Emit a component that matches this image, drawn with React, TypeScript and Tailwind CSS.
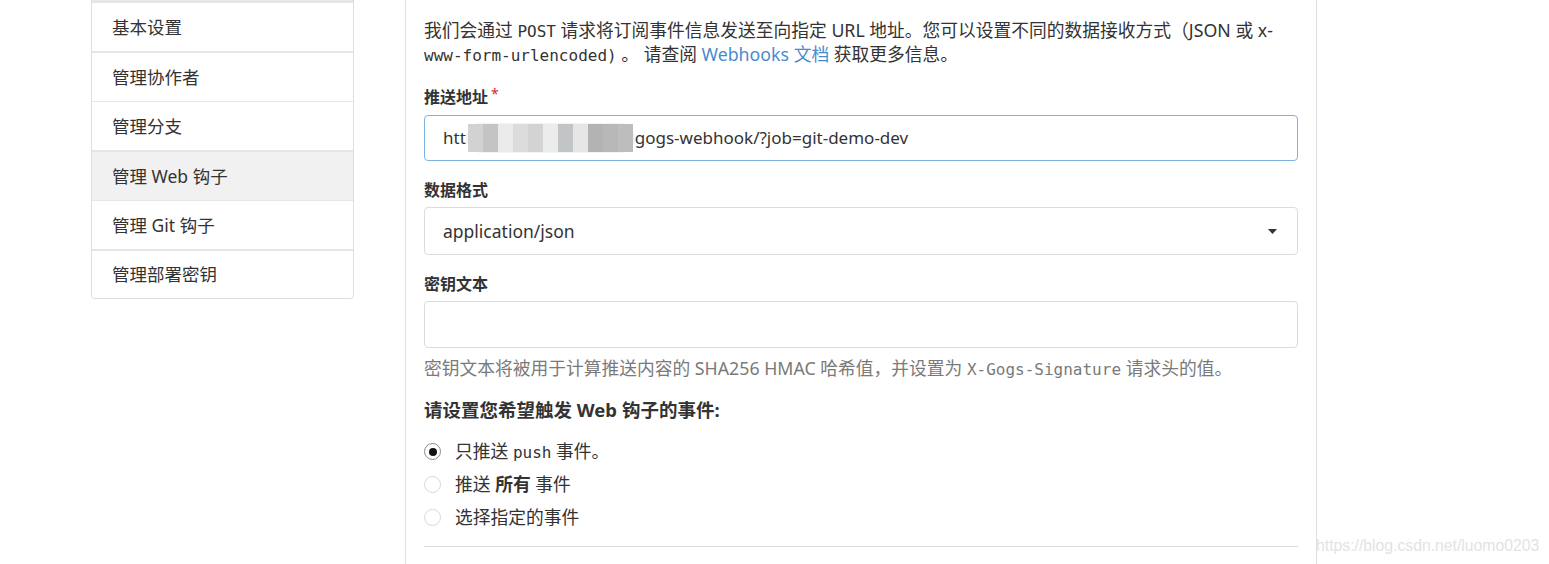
import React from "react";

const menuItems = [
  { label: "基本设置", cls: "border-t-[3px] h-[51px]" },
  { label: "管理协作者", cls: "border-t-2 h-[50px]" },
  { label: "管理分支", cls: "border-t h-[49px]" },
  { label: "管理 Web 钩子", cls: "border-t-2 h-[50px]", active: true },
  { label: "管理 Git 钩子", cls: "border-t h-[49px]" },
  { label: "管理部署密钥", cls: "border-t-2 h-[49px]" },
];

const blurBlocks = [
  "#d2d2d2",
  "#c4c4c4",
  "#ebebeb",
  "#dcdcdc",
  "#d3d3d3",
  "#ececec",
  "#c2c5c5",
  "#e6e6e6",
  "#b3b3b3",
  "#b8b8b8",
  "#bdbdbd",
];

const mono = "font-['DejaVu_Sans_Mono',monospace] text-[16px] leading-none";

const Radio = ({ checked }: { checked?: boolean }) =>
  checked ? (
    <span className="w-[17px] h-[17px] rounded-full border border-[#8a8a8a] bg-white flex items-center justify-center">
      <span className="w-[8px] h-[8px] rounded-full bg-[#111]" />
    </span>
  ) : (
    <span className="w-[17px] h-[17px] rounded-full border border-[#d8d8d8] bg-white" />
  );

const App = () => {
  return (
    <div className="relative w-[1549px] h-[564px] overflow-hidden bg-white text-[#333] font-['Noto_Sans','Noto_Sans_CJK_SC',sans-serif]">
      <div className="flex pl-[91px]">
        {/* side menu */}
        <div className="w-[263px] self-start border-x border-b border-[#dedede] rounded-b-[4px] overflow-hidden">
          {menuItems.map((item) => (
            <div
              key={item.label}
              className={`${item.cls} border-[#e6e6e6] px-5 flex items-center text-[17.5px] ${
                item.active ? "bg-[#f1f1f1]" : "bg-white"
              }`}
            >
              {item.label}
            </div>
          ))}
        </div>

        {/* main panel */}
        <div className="ml-[51px] w-[912px] h-[564px] border-x border-[#dedede] px-[18px] pt-[18px]">
          <div className="text-[17.75px] whitespace-nowrap">
            <div className="h-[24px] leading-[24px]">
              我们会通过 <code className={mono}>POST</code>{" "}
              请求将订阅事件信息发送至向指定 URL 地址。您可以设置不同的数据接收方式（JSON 或 x-
            </div>
            <div className="h-[24px] leading-[24px]">
              <code className={mono}>www-form-urlencoded)</code> 。 请查阅{" "}
              <span className="text-[#4a8bcc]">Webhooks 文档</span> 获取更多信息。
            </div>
          </div>

          <div className="mt-[21px] h-[20px] text-[16px] leading-[20px] font-bold">
            推送地址<span className="text-[#db2828] align-top text-[14px] leading-none ml-[3px] font-normal">*</span>
          </div>
          <div className="mt-[8px] h-[46px] rounded-[4px] border border-[#7fb2e0] pl-[18px] flex items-center text-[17px]">
            <span>htt</span>
            <span className="flex items-center h-[30px] px-[2px] rounded-full bg-[#eef5fb]">
              {blurBlocks.map((c, i) => (
                <span key={i} className="w-[15px] h-[28px]" style={{ backgroundColor: c }} />
              ))}
            </span>
            <span>gogs-webhook/?job=git-demo-dev</span>
          </div>

          <div className="mt-[19px] h-[20px] text-[16px] leading-[20px] font-bold">数据格式</div>
          <div className="mt-[7px] h-[48px] rounded-[4px] border border-[#dcdcdc] pl-[18px] pr-[20px] flex items-center justify-between text-[17.5px]">
            <span>application/json</span>
            <svg width="9" height="5" viewBox="0 0 9 5">
              <path d="M0 0 L9 0 L4.5 5 Z" fill="#333" />
            </svg>
          </div>

          <div className="mt-[19px] h-[20px] text-[16px] leading-[20px] font-bold">密钥文本</div>
          <div className="mt-[7px] h-[47px] rounded-[4px] border border-[#dcdcdc]" />

          <div className="mt-[8px] h-[24px] text-[17.75px] leading-[24px] text-[#7a7a7a] whitespace-nowrap">
            密钥文本将被用于计算推送内容的 SHA256 HMAC 哈希值，并设置为{" "}
            <code className={mono}>X-Gogs-Signature</code> 请求头的值。
          </div>

          <h4 className="mt-[18px] h-[24px] text-[18.5px] leading-[24px] font-bold">
            请设置您希望触发 Web 钩子的事件:
          </h4>

          <div className="mt-[13px] flex flex-col text-[17.75px]">
            <label className="h-[33px] flex items-center gap-[14px]">
              <Radio checked />
              <span>
                只推送 <code className={mono}>push</code> 事件。
              </span>
            </label>
            <label className="h-[33px] flex items-center gap-[14px]">
              <Radio />
              <span>
                推送 <strong>所有</strong> 事件
              </span>
            </label>
            <label className="h-[33px] flex items-center gap-[14px]">
              <Radio />
              <span>选择指定的事件</span>
            </label>
          </div>

          <div className="mt-[12px] border-t border-[#dcdcdc]" />
        </div>
      </div>

      <div className="absolute left-[1316px] top-[535px] text-[15.75px] leading-[22px] text-[#e3e3e3] font-['Liberation_Sans',sans-serif] whitespace-nowrap">
        https://blog.csdn.net/luomo0203
      </div>
    </div>
  );
};

export default App;
